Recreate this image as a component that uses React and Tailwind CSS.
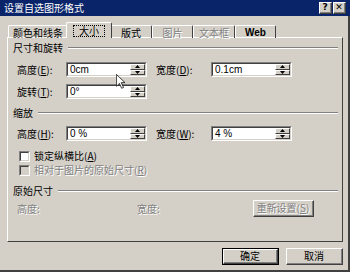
import React from "react";

const F = { fontFamily: '"Noto Sans CJK SC", "Liberation Sans", sans-serif' };

function U({ children }) {
  return <span className="underline underline-offset-1">{children}</span>;
}

function Tri({ up }) {
  return (
    <svg width="5" height="3" viewBox="0 0 5 3">
      <path d={up ? "M0 3 L2.5 0 L5 3 Z" : "M0 0 L2.5 3 L5 0 Z"} fill="#000" />
    </svg>
  );
}

function Spin({ value }) {
  return (
    <div className="flex h-[15px] w-[81px] border-t border-l border-t-[#808080] border-l-[#808080] border-b border-r border-b-white border-r-white">
      <div className="flex flex-1 border-t border-l border-t-[#404040] border-l-[#404040] border-b border-r border-b-[#d4d0c8] border-r-[#d4d0c8] bg-white">
        <div className="flex-1 pl-[2px] pt-[1px] text-[10px] leading-[10px] text-black" style={{ fontFamily: '"Liberation Sans", sans-serif' }}>{value}</div>
        <div className="flex w-[15px] flex-col">
          {[true, false].map((up) => (
            <div key={String(up)} className="flex flex-1 items-center justify-center border-t border-l border-t-white border-l-white border-b border-r border-b-[#404040] border-r-[#404040] bg-[#d4d0c8]">
              <Tri up={up} />
            </div>
          ))}
        </div>
      </div>
    </div>
  );
}

function Group({ title, children, className = "" }) {
  return (
    <div className={className}>
      <div className="flex h-[14px] items-center">
        <span className="text-[10px] leading-[14px] text-black">{title}</span>
        <div className="ml-[5px] flex-1 border-t border-b border-t-[#808080] border-b-white" />
      </div>
      {children}
    </div>
  );
}

function Check({ label, disabled }) {
  return (
    <div className="flex h-[14px] items-center gap-[4px]">
      <div className="h-[11px] w-[11px] border-t border-l border-t-[#808080] border-l-[#808080] border-b border-r border-b-white border-r-white">
        <div className={`h-full w-full border-t border-l border-t-[#404040] border-l-[#404040] border-b border-r border-b-[#d4d0c8] border-r-[#d4d0c8] ${disabled ? "bg-[#d4d0c8]" : "bg-white"}`} />
      </div>
      <span className={`text-[10px] leading-[14px] ${disabled ? "text-[#808080] [text-shadow:1px_1px_0_#fff]" : "text-black"}`}>{label}</span>
    </div>
  );
}

function Btn({ children, w, disabled, def }) {
  return (
    <div className={`${w} ${def ? "border border-black" : ""}`}>
      <div className="flex h-full w-full border-t border-l border-t-white border-l-white border-b border-r border-b-[#404040] border-r-[#404040]">
        <div className="flex flex-1 items-center justify-center border-b border-r border-b-[#808080] border-r-[#808080]">
          <span className={`whitespace-nowrap text-[10px] leading-[12px] ${disabled ? "text-[#808080] [text-shadow:1px_1px_0_#fff]" : "text-black"}`}>{children}</span>
        </div>
      </div>
    </div>
  );
}

function Tab({ label, selected, disabled, w, latin }) {
  const ff = latin ? { fontFamily: '"Liberation Sans", sans-serif' } : undefined;
  return (
    <div
      className={`relative flex ${w} items-center justify-center rounded-t-[2px] border-t border-l border-t-white border-l-white border-r border-r-[#404040] ${selected ? "z-10 -mx-[2px] h-[16px] bg-[#d4d0c8]" : "h-[13px] pt-[1px]"}`}
    >
      {selected ? (
        <span className="border border-dotted border-black px-[5px] text-[10px] leading-[10px] text-black">{label}</span>
      ) : (
        <span style={ff} className={`text-[10px] leading-[12px] ${latin ? "font-bold" : ""} ${disabled ? "text-[#808080] [text-shadow:1px_1px_0_#fff]" : "text-black"}`}>{label}</span>
      )}
    </div>
  );
}

export default function App() {
  return (
    <div className="relative flex h-[272px] w-[350px] flex-col bg-[#d4d0c8] text-black" style={F}>
      <div className="flex h-[16px] items-center bg-[#0a246a] pl-[4px] pr-[4px]">
        <span className="flex-1 text-[10px] leading-[12px] text-white">设置自选图形格式</span>
        <div className="flex gap-[1px]">
          {["?", "✕"].map((c) => (
            <div key={c} className="flex h-[12px] w-[13px] border-t border-l border-t-white border-l-white border-b border-r border-b-[#404040] border-r-[#404040] bg-[#d4d0c8]">
              <div className="flex flex-1 items-center justify-center border-b border-r border-b-[#808080] border-r-[#808080] text-[9px] font-bold leading-[9px]" style={{ fontFamily: '"DejaVu Sans", sans-serif' }}>{c}</div>
            </div>
          ))}
        </div>
      </div>

      <div className="flex flex-1 flex-col border-r-2 border-b-2 border-r-[#404040] border-b-[#404040] pl-[7px] pr-[5px] pt-[6px]">
        <div className="flex items-end pl-[1px]">
          <Tab label="颜色和线条" w="w-[60px]" />
          <Tab label="大小" selected w="w-[46px]" />
          <Tab label="版式" w="w-[42px]" />
          <Tab label="图片" disabled w="w-[41px]" />
          <Tab label="文本框" disabled w="w-[42px]" />
          <Tab label="Web" latin w="w-[41px]" />
        </div>
        <div className="-mt-[1px] flex h-[205px] flex-col border-t border-l border-t-white border-l-white border-b border-r border-b-[#404040] border-r-[#404040] pl-[5px] pr-[4px] pt-[3px]">
          <Group title="尺寸和旋转">
            <div className="mt-[7px] flex items-center pl-[4px]">
              <span className="w-[49px] text-[10px] leading-[14px]">高度(<U>E</U>):</span>
              <Spin value="0cm" />
              <span className="ml-[9px] w-[55px] text-[10px] leading-[14px]">宽度(<U>D</U>):</span>
              <Spin value="0.1cm" />
            </div>
            <div className="mt-[7px] flex items-center pl-[4px]">
              <span className="w-[49px] text-[10px] leading-[14px]">旋转(<U>T</U>):</span>
              <Spin value="0°" />
            </div>
          </Group>
          <Group title="缩放" className="mt-[7px]">
            <div className="mt-[6px] flex items-center pl-[4px]">
              <span className="w-[49px] text-[10px] leading-[14px]">高度(<U>H</U>):</span>
              <Spin value="0 %" />
              <span className="ml-[9px] w-[55px] text-[10px] leading-[14px]">宽度(<U>W</U>):</span>
              <Spin value="4 %" />
            </div>
            <div className="mt-[8px] flex flex-col pl-[6px]">
              <Check label={<>锁定纵横比(<U>A</U>)</>} />
              <Check label={<>相对于图片的原始尺寸(<U>R</U>)</>} disabled />
            </div>
          </Group>
          <Group title="原始尺寸" className="mt-[7px]">
            <div className="mt-[2px] flex items-center pl-[4px]">
              <span className="w-[120px] text-[10px] leading-[14px] text-[#808080] [text-shadow:1px_1px_0_#fff]">高度:</span>
              <span className="w-[116px] text-[10px] leading-[14px] text-[#808080] [text-shadow:1px_1px_0_#fff]">宽度:</span>
              <Btn w="h-[17px] w-[61px]" disabled>重新设置(<U>S</U>)</Btn>
            </div>
          </Group>
        </div>
        <div className="mt-[6px] flex justify-end gap-[7px]">
          <Btn w="h-[17px] w-[57px]" def>确定</Btn>
          <Btn w="h-[17px] w-[57px]">取消</Btn>
        </div>
      </div>

      <svg className="pointer-events-none absolute left-[116px] top-[74px]" width="9" height="15" viewBox="0 0 12 20">
        <path d="M0.5 0.5 L0.5 16.5 L4.5 12.5 L7.5 19 L10 18 L7 11.5 L12 11.5 Z" fill="#fff" stroke="#000" strokeWidth="1" />
      </svg>
    </div>
  );
}
